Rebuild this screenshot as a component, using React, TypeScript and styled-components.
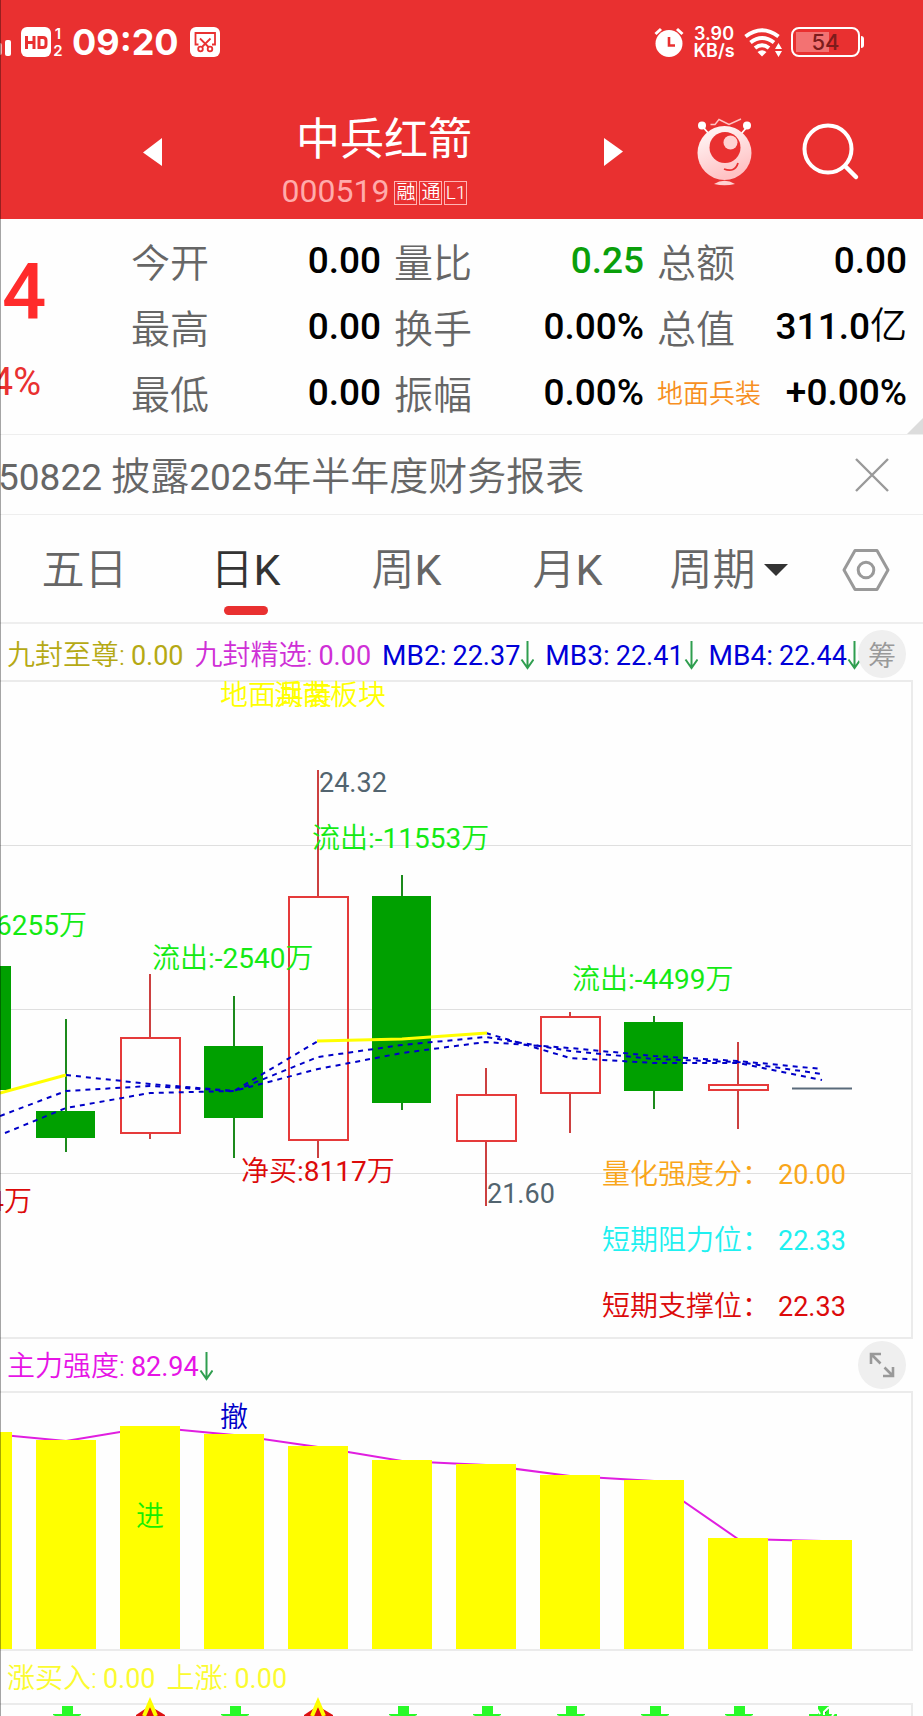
import React from "react";
import styled, { createGlobalStyle } from "styled-components";

const latin = `Roboto, "Noto Sans CJK SC", sans-serif`;
const RED = "#e93030";
const UP = "#e53a3a";
const DOWN = "#00a000";

const GlobalStyle = createGlobalStyle`
  * { box-sizing: border-box; }
  body { margin: 0; background: #fefefe; font-family: ${latin}; font-weight: 350; color: #666; }
  button { border: 0; padding: 0; margin: 0; background: none; font: inherit; color: inherit; cursor: pointer; }
  svg { display: block; }
  h1, p, dl, dt, dd { margin: 0; font-weight: inherit; }
`;

const Page = styled.div`
  position: relative;
  overflow: hidden;
`;

const EdgeShadow = styled.div`
  position: absolute;
  inset: 0 auto 0 0;
  width: 1px;
  background: rgba(0, 0, 0, 0.35);
`;

/* ---------- header ---------- */

const Header = styled.header`
  background: ${RED};
  color: #fff;
`;

const StatusBar = styled.div`
  display: flex;
  align-items: center;
  justify-content: space-between;
  height: 84px;
  padding-right: 59px;
  font-family: Inter, sans-serif;
`;

const StatusGroup = styled.div<{ $gap: number }>`
  display: flex;
  align-items: center;
  gap: ${(p) => p.$gap}px;
`;

const Clock = styled.span`
  font-size: 36px;
  line-height: 40px;
  font-weight: 700;
  padding: 0 10px 0 7px;
`;

const SimSlots = styled.span`
  display: flex;
  flex-direction: column;
  align-items: center;
  width: 12px;
  font-size: 15px;
  line-height: 17px;
  font-weight: 600;
`;

const NetSpeed = styled.span`
  display: flex;
  flex-direction: column;
  align-items: center;
  width: 42px;
  font-size: 18px;
  line-height: 17px;
  font-weight: 600;
`;

const Battery = styled.span`
  display: flex;
  align-items: center;
  justify-content: center;
  width: 69px;
  height: 30px;
  border: 2px solid #fff;
  border-radius: 8px;
  font-size: 22px;
  font-weight: 500;
  color: #7c1c1c;
  background: linear-gradient(90deg, #f37272 33px, transparent 33px) 3px 3px / 59px 20px no-repeat;
`;

const BatteryCap = styled.span`
  width: 3px;
  height: 12px;
  margin-left: 1px;
  border-radius: 0 3px 3px 0;
  background: #fff;
`;

const TitleBar = styled.div`
  display: flex;
  align-items: center;
  height: 135px;
  padding: 0 63px 0 143px;
`;

const TitleBlock = styled.div`
  flex: 1;
  align-self: flex-end;
  display: flex;
  flex-direction: column;
  align-items: center;
  gap: 3px;
  padding-bottom: 8px;
`;

const StockName = styled.h1`
  font-size: 44px;
  line-height: 56px;
  font-weight: 400;
  padding-left: 2px;
`;

const StockCode = styled.div`
  display: flex;
  align-items: center;
  gap: 2px;
  line-height: 40px;
  padding-right: 17px;
`;

const CodeNumber = styled.span`
  font-size: 32px;
  font-weight: 400;
  color: #ffabab;
  margin-right: 3px;
`;

const Badge = styled.span`
  width: 23px;
  height: 24px;
  margin-top: 3px;
  border: 1px solid #ffb4b4;
  font-size: 19px;
  line-height: 22px;
  text-align: center;
`;

const MascotButton = styled.button`
  margin: 0 49px 0 74px;
`;

/* ---------- quote numbers ---------- */

const Quote = styled.section`
  position: relative;
  display: grid;
  grid-template-columns: 118px repeat(3, 1fr);
  column-gap: 13px;
  padding: 10px 16px 7px 0;
  border-bottom: 1px solid #eee;
`;

const PriceColumn = styled.div`
  display: flex;
  flex-direction: column;
  color: #ff2b2b;
`;

const Price = styled.strong`
  font-size: 78px;
  font-weight: 500;
  line-height: 126px;
  padding-left: 2px;
`;

const Change = styled.span`
  display: flex;
  justify-content: flex-end;
  width: 41px;
  overflow: hidden;
  font-size: 38px;
  font-weight: 400;
  line-height: 54px;
  color: ${RED};
`;

const Stats = styled.dl`
  display: flex;
  flex-direction: column;
`;

const Stat = styled.div`
  display: flex;
  justify-content: space-between;
  align-items: center;
  height: 66px;
  white-space: nowrap;
`;

const StatLabel = styled.dt<{ $link?: boolean }>`
  font-size: ${(p) => (p.$link ? 26 : 39)}px;
  line-height: 60px;
  padding-top: ${(p) => (p.$link ? 0 : 3)}px;
  color: ${(p) => (p.$link ? "#f78f22" : "#666")};
`;

const StatValue = styled.dd<{ $color?: string }>`
  font-size: 37px;
  line-height: 60px;
  font-weight: 500;
  padding-bottom: 2px;
  color: ${(p) => p.$color ?? "#000"};
`;

const Thin = styled.span`
  font-weight: 350;
`;

const Latin = styled.span`
  font-weight: 400;
`;

const Corner = styled.span`
  position: absolute;
  right: 0;
  bottom: 0;
  border-left: 16px solid transparent;
  border-bottom: 16px solid #dcdcdc;
`;

/* ---------- notice ---------- */

const Notice = styled.section`
  display: flex;
  align-items: center;
  justify-content: space-between;
  height: 80px;
  padding-right: 34px;
  border-bottom: 1px solid #eee;
`;

const NoticeText = styled.p`
  margin-left: -2px;
  font-size: 39px;
  line-height: 60px;
  padding-top: 6px;
  white-space: nowrap;
`;

const Digits = styled.span`
  font-size: 37px;
  font-weight: 400;
`;

/* ---------- period tabs ---------- */

const Tabs = styled.nav`
  display: grid;
  grid-template-columns: repeat(5, 1fr) 114px;
  height: 109px;
  padding-left: 4px;
  border-bottom: 2px solid #eee;
`;

const Tab = styled.button<{ $active?: boolean }>`
  position: relative;
  display: flex;
  align-items: center;
  justify-content: center;
  padding-top: 2px;
  font-size: 43px;
  line-height: 60px;
  color: ${(p) => (p.$active ? "#333" : "#666")};
  &::after {
    content: "";
    display: ${(p) => (p.$active ? "block" : "none")};
    position: absolute;
    bottom: 7px;
    width: 44px;
    height: 9px;
    border-radius: 5px;
    background: ${RED};
  }
`;

const MenuTab = styled(Tab)`
  gap: 8px;
`;

/* ---------- indicator rows and panels ---------- */

const Legend = styled.div<{ $tall?: boolean }>`
  position: relative;
  display: flex;
  align-items: center;
  gap: 11px;
  height: ${(p) => (p.$tall ? 56 : 52)}px;
  padding: ${(p) => (p.$tall ? 7 : 3)}px 0 0 7px;
  white-space: nowrap;
`;

const Item = styled.span<{ $color: string }>`
  display: flex;
  align-items: center;
  font-size: 28px;
  line-height: 40px;
  color: ${(p) => p.$color};
`;

const ItemValue = styled.span`
  font-size: 27px;
  font-weight: 400;
  margin-left: 6px;
`;

const RoundButton = styled.button`
  position: absolute;
  right: 17px;
  bottom: 2px;
  display: flex;
  align-items: center;
  justify-content: center;
  width: 48px;
  height: 48px;
  border-radius: 50%;
  background: #efefef;
  color: #999;
  font-size: 28px;
`;

const Panel = styled.div<{ $open?: boolean }>`
  margin-right: 10px;
  border: solid #ebebeb;
  border-width: 2px 2px ${(p) => (p.$open ? 0 : 2)}px 0;
`;

const Plot = styled.svg`
  width: 100%;
  height: auto;
  overflow: visible;
  font-size: 28px;
  font-weight: 350;
`;

const Num = styled.tspan`
  font-weight: 400;
`;

const Level = styled.text`
  font-size: 27px;
  font-weight: 400;
`;

const Series = styled.polyline<{ $kind: "dash" | "solid" | "bar" }>`
  fill: none;
  stroke: ${(p) => (p.$kind === "dash" ? "#0000c8" : p.$kind === "solid" ? "#ffff00" : "#e01ee0")};
  stroke-width: ${(p) => (p.$kind === "solid" ? 3 : 2)};
  stroke-dasharray: ${(p) => (p.$kind === "dash" ? "5 5" : "none")};
`;

/* ---------- icons ---------- */

const Signal = () => (
  <svg width="11" height="30" viewBox="0 0 11 30">
    <rect x="-3" y="16" width="5" height="12" rx="2" fill="#fff" opacity=".6" />
    <rect x="5" y="13" width="6" height="16" rx="2" fill="#fff" />
  </svg>
);

const HdIcon = () => (
  <svg width="30" height="30" viewBox="0 0 30 30">
    <rect width="30" height="30" rx="6" fill="#fff" />
    <path d="M5.500 9v13M13 9v13M6 15.500h7M18 10.500h4q3 0 3 3v4q0 3-3 3h-4z" fill="none" stroke={RED} strokeWidth="3" />
  </svg>
);

const ScissorsIcon = () => (
  <svg width="30" height="30" viewBox="0 0 30 30">
    <rect width="30" height="30" rx="6" fill="#fff" />
    <g fill="none" stroke={RED} strokeWidth="1.800">
      <path d="M8.500 17.500H5.500V6h19.500v11.500h-3M10 11.500l8.500 8.500M20.500 11.500l-8.500 8.500" />
      <circle cx="10.500" cy="22" r="2.300" />
      <circle cx="20" cy="22" r="2.300" />
    </g>
  </svg>
);

const AlarmIcon = () => (
  <svg width="30" height="30" viewBox="0 0 30 30">
    <circle cx="15" cy="16.500" r="13.500" fill="#fff" />
    <path d="M1.500 7l5.500-5M28.500 7L23 2" stroke="#fff" strokeWidth="3" />
    <path d="M15 10v8.500h6" fill="none" stroke={RED} strokeWidth="2.600" />
  </svg>
);

const WifiIcon = () => (
  <svg width="38" height="30" viewBox="0 0 38 30">
    <g fill="none" stroke="#fff" strokeWidth="4">
      <path d="M1.500 9.500Q18 -3 34.500 9.500" />
      <path d="M6.500 15.500Q18 6.500 30 15.500" />
      <path d="M11 21Q18 15.500 25 21" />
    </g>
    <path d="M13.500 25q4.500-3.500 9 0L18 29.500z" fill="#fff" />
    <path d="M31 22l3.500-6 3.500 6zM31 24h7l-3.500 6z" fill="#fff" />
  </svg>
);

const Triangle = ({ right }: { right?: boolean }) => (
  <svg width="20" height="28" viewBox="0 0 20 28">
    <path d={right ? "M1 0v28L20 13.500z" : "M19 0v28L0 14.500z"} fill="#fff" />
  </svg>
);

const Mascot = () => (
  <svg width="56" height="68" viewBox="0 0 56 68">
    <defs>
      <linearGradient id="mascotBody" x1="0" y1="0" x2=".4" y2="1">
        <stop offset=".2" stopColor="#fff1f1" />
        <stop offset="1" stopColor="#ffc2c4" />
      </linearGradient>
    </defs>
    <path d="M13.500 6.500h4.500l4-5 10 5 12-5.500" fill="none" stroke="#ffc4c4" strokeWidth="1.400" />
    <path d="M6 9l6 7M50 9l-6 7" stroke="#fff" strokeWidth="1.800" />
    <circle cx="5" cy="7.500" r="4" fill="#fff" />
    <circle cx="50" cy="7.500" r="4" fill="#fff" />
    <circle cx="27.500" cy="35" r="27" fill="url(#mascotBody)" />
    <circle cx="28" cy="29.500" r="15.500" fill={RED} />
    <circle cx="33.500" cy="24.500" r="7" fill="#ffd2d2" />
    <path d="M27 51q11 4 14-6" fill="none" stroke={RED} strokeWidth="1.800" />
    <path d="M17 66q10.500-6.500 21 0-10.500 2.500-21 0z" fill="#ffd0d0" />
  </svg>
);

const SearchIcon = () => (
  <svg width="58" height="58" viewBox="0 0 58 58" fill="none" stroke="#fff" strokeLinecap="round">
    <circle cx="26" cy="26" r="23.500" strokeWidth="4" />
    <path d="M43.500 43.500L54 54" strokeWidth="4.500" />
  </svg>
);

const CloseIcon = () => (
  <svg width="34" height="34" viewBox="0 0 34 34" stroke="#999" strokeWidth="2.400">
    <path d="M1 1l32 32M33 1L1 33" />
  </svg>
);

const HexIcon = () => (
  <svg width="48" height="44" viewBox="0 0 48 44" fill="none" stroke="#999" strokeWidth="3" strokeLinejoin="round">
    <path d="M13 2.500h22L46 22 35 41.500H13L2 22z" />
    <circle cx="24" cy="22" r="7.800" />
  </svg>
);

const Caret = () => (
  <svg width="24" height="12" viewBox="0 0 24 12">
    <path d="M0 0h24L12 12z" fill="#333" />
  </svg>
);

const DownArrow = () => (
  <svg width="14" height="30" viewBox="0 0 14 30" fill="none" stroke="#2f9e4f" strokeWidth="2">
    <path d="M7.500 0v26M1.500 18.500L7.500 27l6-8.500" />
  </svg>
);

const ExpandIcon = () => (
  <svg width="26" height="26" viewBox="0 0 26 26" fill="none" stroke="#999" strokeWidth="2.600">
    <path d="M2 12V2h10M2 2l9.500 9.500M24 15v9H14M24 24l-8.500-8.500" />
  </svg>
);

/* ---------- data ---------- */

const stats = [
  [["今开", "0.00"], ["最高", "0.00"], ["最低", "0.00"]],
  [["量比", "0.25"], ["换手", "0.00%"], ["振幅", "0.00%"]],
  [["总额", "0.00"], ["总值", "311.0亿"], ["地面兵装", "+0.00%"]],
];

const tabs = ["日", "周", "月"];

type Candle = { x: number; top: number; bottom: number; high: number; low: number; up?: boolean };

const candles: Candle[] = [
  { x: -18, top: 284, bottom: 408, high: 284, low: 408 },
  { x: 66, top: 429, bottom: 456, high: 337, low: 470 },
  { x: 150, top: 355, bottom: 452, high: 292, low: 457, up: true },
  { x: 234, top: 364, bottom: 436, high: 314, low: 476 },
  { x: 318, top: 214, bottom: 459, high: 88, low: 476, up: true },
  { x: 402, top: 214, bottom: 421, high: 193, low: 428 },
  { x: 486, top: 412, bottom: 460, high: 386, low: 524, up: true },
  { x: 570, top: 334, bottom: 412, high: 330, low: 451, up: true },
  { x: 654, top: 340, bottom: 409, high: 334, low: 427 },
  { x: 738, top: 402, bottom: 409, high: 360, low: 447, up: true },
];

const averages = [
  "66,393 150,402 234,409 318,359",
  "486,351 570,376 654,381 738,381 822,398",
  "0,434 66,409 150,404 234,409 318,375 402,363 486,355 570,369 654,377 738,380 822,392",
  "5,451 66,426 150,411 234,409 318,387 402,371 486,360 570,366 654,374 738,379 822,387",
];

const bars = [39, 47, 33, 41, 53, 67, 71, 82, 87, 145, 147].map((top, i) => ({ x: i * 84 - 18, top }));

const scores = [
  { label: "量化强度分：", value: "20.00", color: "#f9a61a", y: 502 },
  { label: "短期阻力位：", value: "22.33", color: "#1ff0f0", y: 568 },
  { label: "短期支撑位：", value: "22.33", color: "#dc0a0a", y: 634 },
];

const CandleMark = ({ x, top, bottom, high, low, up }: Candle) => (
  <g>
    <path
      d={`M${x} ${high}V${top}M${x} ${bottom}V${low}`}
      stroke={up ? "#cc4040" : "#1c8a1c"}
      strokeWidth="2"
    />
    {up ? (
      <rect x={x - 29} y={top + 1} width="59" height={bottom - top - 2} fill="none" stroke={UP} strokeWidth="2" />
    ) : (
      <rect x={x - 30} y={top} width="59" height={bottom - top} fill={DOWN} />
    )}
  </g>
);

type MetricProps = { label: string; value: string; color: string; falling?: boolean };

const Metric = ({ label, value, color, falling }: MetricProps) => (
  <Item $color={color}>
    {label.startsWith("MB") ? <Latin>{label}:</Latin> : `${label}:`}
    <ItemValue>{value}</ItemValue>
    {falling && <DownArrow />}
  </Item>
);

export default function App() {
  return (
    <Page>
      <GlobalStyle />
      <Header>
        <StatusBar>
          <StatusGroup $gap={10}>
            <Signal />
            <StatusGroup $gap={1}>
              <HdIcon />
              <SimSlots>
                <span>1</span>
                <span>2</span>
              </SimSlots>
              <Clock>09:20</Clock>
              <ScissorsIcon />
            </StatusGroup>
          </StatusGroup>
          <StatusGroup $gap={9}>
            <AlarmIcon />
            <NetSpeed>
              <span>3.90</span>
              <span>KB/s</span>
            </NetSpeed>
            <WifiIcon />
            <StatusGroup $gap={0}>
              <Battery>54</Battery>
              <BatteryCap />
            </StatusGroup>
          </StatusGroup>
        </StatusBar>
        <TitleBar>
          <button aria-label="上一只">
            <Triangle />
          </button>
          <TitleBlock>
            <StockName>中兵红箭</StockName>
            <StockCode>
              <CodeNumber>000519</CodeNumber>
              <Badge>融</Badge>
              <Badge>通</Badge>
              <Badge>L1</Badge>
            </StockCode>
          </TitleBlock>
          <button aria-label="下一只">
            <Triangle right />
          </button>
          <MascotButton aria-label="助手">
            <Mascot />
          </MascotButton>
          <button aria-label="搜索">
            <SearchIcon />
          </button>
        </TitleBar>
      </Header>

      <Quote>
        <PriceColumn>
          <Price>4</Price>
          <Change>4%</Change>
        </PriceColumn>
        {stats.map((column) => (
          <Stats key={column[0][0]}>
            {column.map(([label, value]) => (
              <Stat key={label}>
                <StatLabel $link={label.length > 2}>{label}</StatLabel>
                <StatValue $color={label === "量比" ? "#0a9f0a" : undefined}>
                  {value.replace("亿", "")}
                  {value.endsWith("亿") && <Thin>亿</Thin>}
                </StatValue>
              </Stat>
            ))}
          </Stats>
        ))}
        <Corner />
      </Quote>

      <Notice>
        <NoticeText>
          <Digits>50822 </Digits>披露<Digits>2025</Digits>年半年度财务报表
        </NoticeText>
        <button aria-label="关闭">
          <CloseIcon />
        </button>
      </Notice>

      <Tabs>
        <Tab>五日</Tab>
        {tabs.map((unit) => (
          <Tab key={unit} $active={unit === "日"}>
            {unit}
            <Latin>K</Latin>
          </Tab>
        ))}
        <MenuTab>
          周期
          <Caret />
        </MenuTab>
        <Tab aria-label="设置">
          <HexIcon />
        </Tab>
      </Tabs>

      <Legend $tall>
        <Metric label="九封至尊" value="0.00" color="#b5a914" />
        <Metric label="九封精选" value="0.00" color="#cf2fd6" />
        <Metric label="MB2" value="22.37" color="#0000d8" falling />
        <Metric label="MB3" value="22.41" color="#0000d8" falling />
        <Metric label="MB4" value="22.44" color="#0000d8" falling />
        <RoundButton>筹</RoundButton>
      </Legend>
      <Panel>
        <Plot viewBox="0 0 911 655">
          <path d="M0 163.500H911M0 327.500H911M0 491.500H911" stroke="#dfdfdf" />
          {candles.map((c) => (
            <CandleMark key={c.x} {...c} />
          ))}
          <path d="M792 406.500h60" stroke="#5a6b7b" strokeWidth="2" />
          {averages.map((points) => (
            <Series key={points} $kind="dash" points={points} />
          ))}
          <Series $kind="solid" points="0,411 66,393" />
          <Series $kind="solid" points="317,359 402,357 487,351" />
          <g fill="#ffff00">
            <text x="220" y="23">地面兵装</text>
            <text x="274" y="23">湖南板块</text>
          </g>
          <g fill="#52646f">
            <Level x="319" y="110">24.32</Level>
            <Level x="487" y="521">21.60</Level>
          </g>
          <g fill="#14ea14">
            <text x="312" y="166">流出<Num>:-11553</Num>万</text>
            <text x="-4" y="253"><Num>6255</Num>万</text>
            <text x="152" y="286">流出<Num>:-2540</Num>万</text>
            <text x="572" y="307">流出<Num>:-4499</Num>万</text>
          </g>
          <g fill="#dc0a0a">
            <text x="241" y="499">净买<Num>:8117</Num>万</text>
            <text x="32" y="529" textAnchor="end"><Num>4</Num>万</text>
          </g>
          {scores.map((s) => (
            <g key={s.label} fill={s.color}>
              <text x="602" y={s.y}>{s.label}</text>
              <Level x="778" y={s.y}>{s.value}</Level>
            </g>
          ))}
        </Plot>
      </Panel>

      <Legend>
        <Metric label="主力强度" value="82.94" color="#e614e6" falling />
        <RoundButton aria-label="展开">
          <ExpandIcon />
        </RoundButton>
      </Legend>
      <Panel>
        <Plot viewBox="0 0 911 256">
          <Series $kind="bar" points={bars.map((b) => `${b.x},${b.top + 1}`).join(" ")} />
          {bars.map((b) => (
            <rect key={b.x} x={b.x - 30} y={b.top} width="60" height={256 - b.top} fill="#ffff00" />
          ))}
          <text x="234" y="34" textAnchor="middle" fill="#0000c8">撤</text>
          <text x="150" y="133" textAnchor="middle" fill="#14f000">进</text>
        </Plot>
      </Panel>

      <Legend>
        <Metric label="涨买入" value="0.00" color="#fbfb30" />
        <Metric label="上涨" value="0.00" color="#fbfb30" />
      </Legend>
      <Panel $open>
        <Plot viewBox="0 0 911 11">
          {[66, 234, 402, 486, 570, 654, 738].map((x) => (
            <path key={x} d={`M${x - 4} 1h11v8h8v1l-2 1h-24l-2-1v-1h9z`} fill="#28fa28" />
          ))}
          <path d="M818 1h11v8h8v2h-28v-2h9z" fill="#28fa28" />
          <path d="M817 4l3 5M829 2l-5 5v3M835 7l-3 4" stroke="#fff" strokeWidth="2" />
          {[150, 318].map((x) => (
            <g key={x}>
              <path d={`M${x - 14} 10l9-6 5-2 5 2 10 6v1h-29z`} fill="#dc1010" />
              <path d={`M${x - 6} 11l6-14 6 14`} fill="none" stroke="#ffff00" strokeWidth="4" />
            </g>
          ))}
        </Plot>
      </Panel>
      <EdgeShadow />
    </Page>
  );
}
